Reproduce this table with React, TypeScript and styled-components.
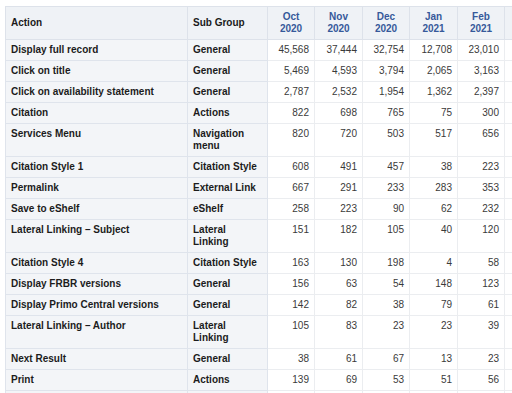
import React from "react";
import styled, { createGlobalStyle } from "styled-components";

type Row = { action: string; group: string; values: number[] };

const months = ["Oct 2020", "Nov 2020", "Dec 2020", "Jan 2021", "Feb 2021"];
const monthWidths = [47, 48, 47, 48, 47];

const rows: Row[] = [
  { action: "Display full record", group: "General", values: [45568, 37444, 32754, 12708, 23010] },
  { action: "Click on title", group: "General", values: [5469, 4593, 3794, 2065, 3163] },
  { action: "Click on availability statement", group: "General", values: [2787, 2532, 1954, 1362, 2397] },
  { action: "Citation", group: "Actions", values: [822, 698, 765, 75, 300] },
  { action: "Services Menu", group: "Navigation menu", values: [820, 720, 503, 517, 656] },
  { action: "Citation Style 1", group: "Citation Style", values: [608, 491, 457, 38, 223] },
  { action: "Permalink", group: "External Link", values: [667, 291, 233, 283, 353] },
  { action: "Save to eShelf", group: "eShelf", values: [258, 223, 90, 62, 232] },
  { action: "Lateral Linking – Subject", group: "Lateral Linking", values: [151, 182, 105, 40, 120] },
  { action: "Citation Style 4", group: "Citation Style", values: [163, 130, 198, 4, 58] },
  { action: "Display FRBR versions", group: "General", values: [156, 63, 54, 148, 123] },
  { action: "Display Primo Central versions", group: "General", values: [142, 82, 38, 79, 61] },
  { action: "Lateral Linking – Author", group: "Lateral Linking", values: [105, 83, 23, 23, 39] },
  { action: "Next Result", group: "General", values: [38, 61, 67, 13, 23] },
  { action: "Print", group: "Actions", values: [139, 69, 53, 51, 56] },
];

const Global = createGlobalStyle`
  html, body {
    margin: 0;
    background: #ffffff;
    overflow: hidden;
  }
  body {
    font-family: "Liberation Sans", Arial, sans-serif;
  }
`;

const Page = styled.div`
  width: 512px;
  height: 393px;
  padding: 6px 0 0 5px;
  box-sizing: border-box;
  overflow: hidden;
`;

const Table = styled.table`
  border-collapse: collapse;
  table-layout: fixed;
  width: 546px;
  font-size: 10px;
  line-height: 12px;
`;

const Col = styled.col<{ $w: number }>`
  width: ${(p) => p.$w}px;
`;

const HeadCell = styled.th<{ $numeric?: boolean }>`
  background: #eff2f6;
  border: 1px solid #dde2ea;
  padding: 4px 5px;
  font-weight: bold;
  text-align: ${(p) => (p.$numeric ? "center" : "left")};
  color: ${(p) => (p.$numeric ? "#36599a" : "#1a1a1a")};
  vertical-align: middle;
`;

const LabelCell = styled.td`
  background: #f3f5f8;
  border: 1px solid #dfe4ec;
  padding: 4px 5px;
  font-weight: bold;
  color: #1c1c1c;
  vertical-align: top;
`;

const NumCell = styled.td`
  background: #ffffff;
  border: 1px solid #ebedf0;
  padding: 4px 5px;
  text-align: right;
  color: #3a3a3a;
  vertical-align: top;
`;

const EmptyRow = styled.tr`
  height: 21px;
`;

const fmt = (n: number) => n.toLocaleString("en-US");

export default function App() {
  return (
    <>
      <Global />
      <Page>
        <Table>
          <colgroup>
            <Col $w={182} />
            <Col $w={80} />
            {monthWidths.map((w, i) => (
              <Col key={i} $w={w} />
            ))}
            <Col $w={47} />
          </colgroup>
          <thead>
            <tr>
              <HeadCell>Action</HeadCell>
              <HeadCell>Sub Group</HeadCell>
              {months.map((m) => {
                const [mon, year] = m.split(" ");
                return (
                  <HeadCell key={m} $numeric>
                    {mon}
                    <br />
                    {year}
                  </HeadCell>
                );
              })}
              <HeadCell $numeric />
            </tr>
          </thead>
          <tbody>
            {rows.map((r) => (
              <tr key={r.action}>
                <LabelCell>{r.action}</LabelCell>
                <LabelCell>{r.group}</LabelCell>
                {r.values.map((v, i) => (
                  <NumCell key={i}>{fmt(v)}</NumCell>
                ))}
                <NumCell />
              </tr>
            ))}
            <EmptyRow>
              <LabelCell />
              <LabelCell />
              {months.map((m) => (
                <NumCell key={m} />
              ))}
              <NumCell />
            </EmptyRow>
          </tbody>
        </Table>
      </Page>
    </>
  );
}
